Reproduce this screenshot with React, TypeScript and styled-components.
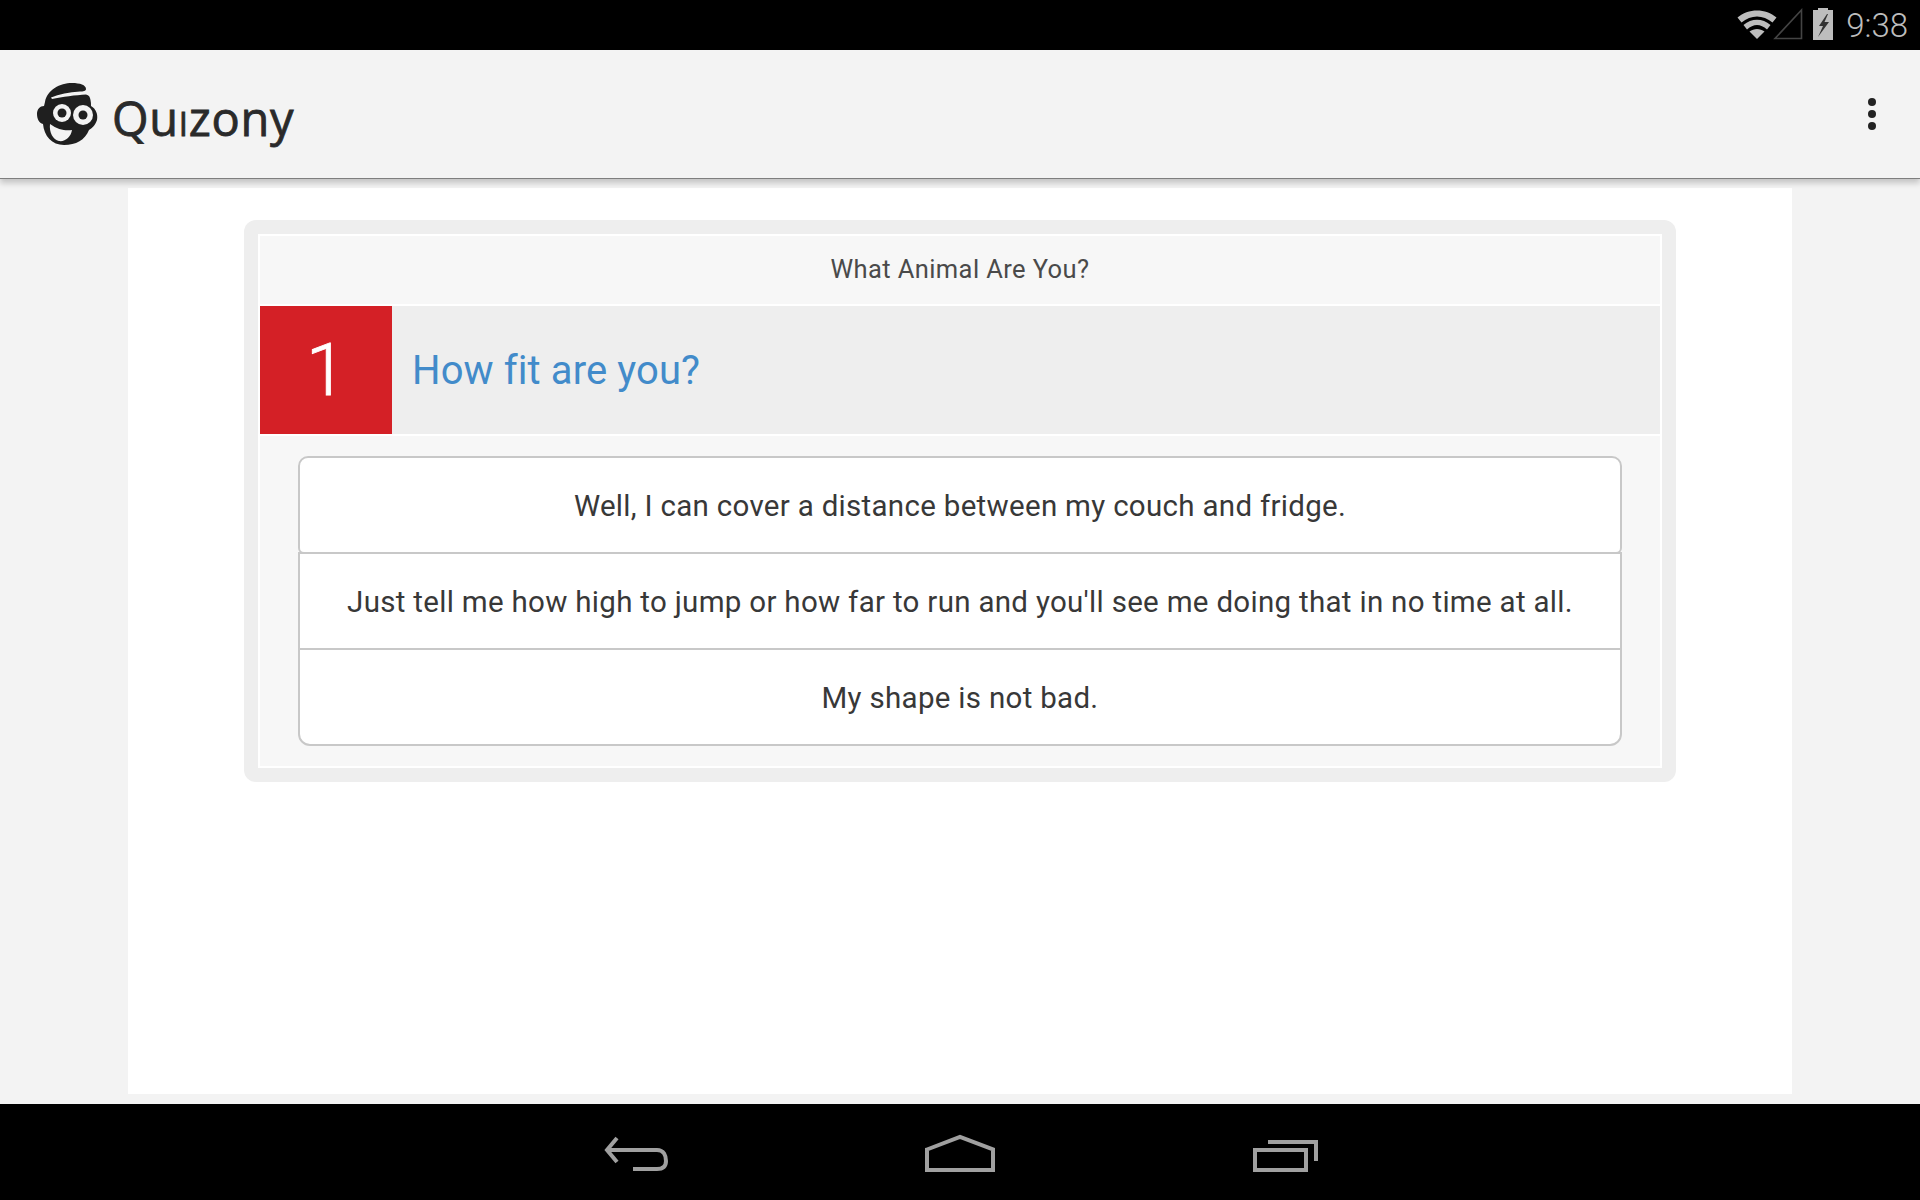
import React from "react";
import styled, { createGlobalStyle } from "styled-components";

const Global = createGlobalStyle`
  html, body { margin: 0; padding: 0; height: 100%; background: #f3f3f3; }
  #root { height: 100%; }
`;

const Screen = styled.div`
  width: 1920px;
  height: 1200px;
  display: flex;
  flex-direction: column;
  font-family: Roboto, "Liberation Sans", sans-serif;
  overflow: hidden;
`;

const StatusBar = styled.header`
  height: 50px;
  flex: none;
  background: #000;
  display: flex;
  align-items: center;
  justify-content: flex-end;
  padding-right: 12px;
`;

const StatusIcons = styled.div`
  display: flex;
  align-items: center;
  height: 50px;
`;

const Clock = styled.span`
  color: #bdbdbd;
  font-size: 33px;
  font-weight: 300;
  margin-left: 12px;
`;

const AppBar = styled.div`
  height: 128px;
  flex: none;
  box-sizing: content-box;
  background: #f3f3f3;
  border-bottom: 1px solid #7e7e7e;
  display: flex;
  align-items: center;
  justify-content: space-between;
  padding: 0 44px 0 36px;
  position: relative;
  z-index: 2;
  box-shadow: 0 4px 6px rgba(0, 0, 0, 0.2);
`;

const Brand = styled.div`
  display: flex;
  align-items: center;
  gap: 14px;
`;

const BrandName = styled.span`
  font-family: "Open Sans", sans-serif;
  font-size: 47px;
  line-height: 60px;
  letter-spacing: 0.7px;
  padding-top: 7px;
  color: #2a2a2a;
  -webkit-text-stroke: 0.8px #2a2a2a;
`;

const SmallI = styled.span`
  font-variant: small-caps;
`;

const Main = styled.main`
  flex: 1;
  display: flex;
  padding: 9px 128px 10px;
  background: #f3f3f3;
`;

const Panel = styled.section`
  flex: 1;
  background: #fff;
  padding: 32px 116px;
`;

const Card = styled.article`
  background: #eee;
  border-radius: 12px;
  padding: 14px;
`;

const CardInner = styled.div`
  border: 2px solid #fff;
  background: #f7f7f7;
`;

const QuizTitle = styled.div`
  height: 68px;
  box-sizing: border-box;
  padding-bottom: 2px;
  display: flex;
  align-items: center;
  justify-content: center;
  font-size: 25.5px;
  letter-spacing: 0.4px;
  color: #4a4a4a;
`;

const QuestionRow = styled.div`
  display: flex;
  height: 128px;
  background: #eee;
  border-top: 2px solid #fff;
  border-bottom: 2px solid #fff;
`;

const Number = styled.div`
  width: 132px;
  flex: none;
  background: #d42026;
  color: #fff;
  display: flex;
  align-items: center;
  justify-content: center;
  font-size: 72px;
  font-weight: 300;
  -webkit-text-stroke: 0.8px #fff;
`;

const Question = styled.h2`
  margin: 0;
  padding-left: 20px;
  display: flex;
  align-items: center;
  font-size: 40px;
  font-weight: 400;
  letter-spacing: 0.1px;
  color: #428bca;
`;

const Answers = styled.div`
  padding: 20px 38px;
  display: flex;
  flex-direction: column;
`;

const Answer = styled.div<{ $pos: "first" | "middle" | "last" }>`
  box-sizing: border-box;
  background: #fff;
  border: 2px solid #c8c8c8;
  border-bottom-width: ${(p) => (p.$pos === "middle" ? "0" : "2px")};
  border-radius: ${(p) =>
    p.$pos === "first" ? "10px 10px 6px 6px" : p.$pos === "last" ? "0 0 12px 12px" : "0"};
  height: ${(p) => (p.$pos === "middle" ? "96px" : "98px")};
  margin-top: ${(p) => (p.$pos === "middle" ? "-2px" : "0")};
  padding-top: 2px;
  display: flex;
  align-items: center;
  justify-content: center;
  font-size: 29.5px;
  letter-spacing: 0.3px;
  color: #383838;
`;

const NavBar = styled.footer`
  height: 96px;
  box-sizing: border-box;
  flex: none;
  background: #000;
  display: flex;
  align-items: flex-start;
  padding: 30px 0 0 604px;
`;

const NavIcon = styled.svg<{ $gap?: number }>`
  display: block;
  flex: none;
  margin-left: ${(p) => p.$gap ?? 0}px;
`;

const StatusIcon = styled.svg<{ $gap?: number; $lift?: number }>`
  display: block;
  flex: none;
  margin-left: ${(p) => p.$gap ?? 0}px;
  margin-bottom: ${(p) => p.$lift ?? 0}px;
`;

const MenuDots = styled.svg`
  display: block;
`;

export default function App() {
  return (
    <>
      <Global />
      <Screen>
        <StatusBar>
          <StatusIcons>
            <StatusIcon width="40" height="29" viewBox="0 0 40 29" $lift={2}>
              <path d="M0.5 7.5 C11 -2 29 -2 39.5 7.5 L35.5 12.5 C26 4.5 14 4.5 4.5 12.5 Z" fill="#bdbdbd" />
              <path d="M6.5 15 C14.5 8 25.5 8 33.5 15 L30 19.5 C23.5 13.5 16.5 13.5 10 19.5 Z" fill="#bdbdbd" />
              <path d="M12.5 21.5 C17 18 23 18 27.5 21.5 L20 29 Z" fill="#bdbdbd" />
            </StatusIcon>
            <StatusIcon width="30" height="32" viewBox="0 0 30 32" $gap={-4} $lift={3}>
              <path d="M28.5 2 V30.5 H2 Z" fill="none" stroke="#444" strokeWidth="1.6" />
            </StatusIcon>
            <StatusIcon width="22" height="32" viewBox="0 0 22 32" $gap={9} $lift={3}>
              <path d="M6 0 H16 V2 H21 V32 H1 V2 H6 Z" fill="#bdbdbd" />
              <path d="M15 6 L7 18 H11 L6 29 L17 14 H12.5 L16 6 Z" fill="#333" />
            </StatusIcon>
            <Clock>9:38</Clock>
          </StatusIcons>
        </StatusBar>
        <AppBar>
          <Brand>
            <svg width="62" height="64" viewBox="0 0 62 64">
              <path
                d="M9 20 C11 8 24 1 36 1 C44 1 50 3 50 7 C50 9 47 9.5 44 9.5 C33 10 23 12 15 15.5 L16 17 C26 15 40 13 50 12.5 C53 13 54 15 54.5 18 C55 20 55 22 55 24 C60 27 62 32 61 38 C59 44 56 46 53 48 C49 58 40 63 28 63 C16 63 8 54 7 42 C3 41 1 37 1 32 C1 27 4 24 8 24 Z"
                fill="#1f1f1f"
              />
              <circle cx="26" cy="31" r="9" fill="#f3f3f3" />
              <circle cx="26" cy="31" r="4.5" fill="#1f1f1f" />
              <circle cx="47" cy="33" r="10" fill="#f3f3f3" />
              <circle cx="47" cy="33" r="4.5" fill="#1f1f1f" />
              <path d="M14 42 C22 48 30 49 36 48 C35 55 29 60 23 59 C17 58 13 50 14 42 Z" fill="#f3f3f3" />
            </svg>
            <BrandName>
              Qu<SmallI>i</SmallI>zony
            </BrandName>
          </Brand>
          <MenuDots width="8" height="32" viewBox="0 0 8 32">
            <circle cx="4" cy="4" r="4" fill="#222" />
            <circle cx="4" cy="16" r="4" fill="#222" />
            <circle cx="4" cy="28" r="4" fill="#222" />
          </MenuDots>
        </AppBar>
        <Main>
          <Panel>
            <Card>
              <CardInner>
                <QuizTitle>What Animal Are You?</QuizTitle>
                <QuestionRow>
                  <Number>1</Number>
                  <Question>How fit are you?</Question>
                </QuestionRow>
                <Answers>
                  <Answer $pos="first">Well, I can cover a distance between my couch and fridge.</Answer>
                  <Answer $pos="middle">
                    Just tell me how high to jump or how far to run and you'll see me doing that in no time at all.
                  </Answer>
                  <Answer $pos="last">My shape is not bad.</Answer>
                </Answers>
              </CardInner>
            </Card>
          </Panel>
        </Main>
        <NavBar>
          <NavIcon width="66" height="40" viewBox="0 0 66 40" fill="none" stroke="#a0a0a0" strokeWidth="4">
            <path d="M13 4 L3 16 L13 28" />
            <path d="M3 16 H53 C60 16 62 22 62 27 C62 32 59 35 53 35 H29" />
          </NavIcon>
          <NavIcon width="70" height="40" viewBox="0 0 70 40" fill="none" stroke="#a0a0a0" strokeWidth="4" $gap={255}>
            <path d="M2 15.5 L35 3 L68 15.5 V36 H2 Z" />
          </NavIcon>
          <NavIcon width="66" height="40" viewBox="0 0 66 40" fill="none" stroke="#a0a0a0" strokeWidth="4" $gap={258}>
            <path d="M2 16 H53 V36 H2 Z" />
            <path d="M15 8 H63 V27" />
          </NavIcon>
        </NavBar>
      </Screen>
    </>
  );
}
